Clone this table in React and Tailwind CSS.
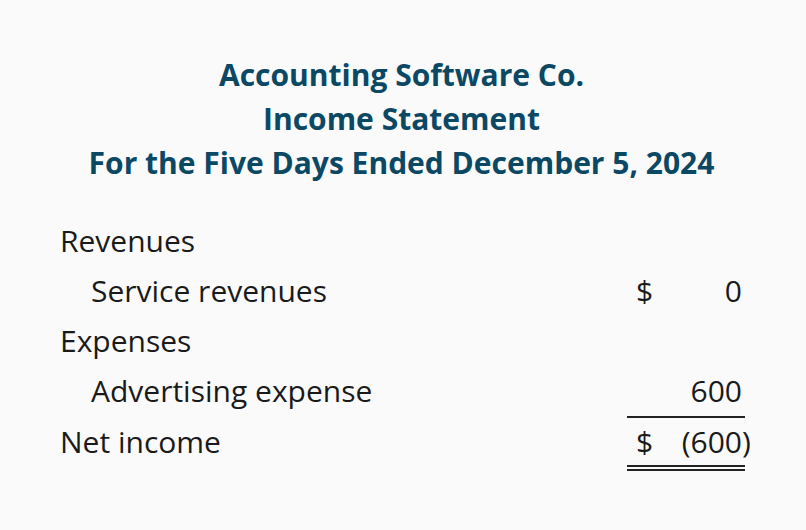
export default function App() {
  const font = { fontFamily: '"Open Sans", sans-serif' };
  return (
    <div className="w-[806px] h-[530px] bg-[#fafafa] text-[#1a1a1a]" style={font}>
      <div className="pt-[53px] pr-[3px] flex flex-col items-center text-[#0b4864] font-bold text-[30px] leading-[44px]">
        <div>Accounting Software Co.</div>
        <div>Income Statement</div>
        <div>For the Five Days Ended December 5, 2024</div>
      </div>
      <div className="mt-[31px] pl-[60px] pr-[61px] text-[30px] leading-[50px]">
        <div>Revenues</div>
        <div className="flex">
          <div className="flex-1 pl-[31px]">Service revenues</div>
          <div className="w-[118px] flex justify-between pl-[9px] pr-[3px]">
            <span>$</span>
            <span>0</span>
          </div>
        </div>
        <div>Expenses</div>
        <div className="flex h-[52px] items-start">
          <div className="flex-1 pl-[31px]">Advertising expense</div>
          <div className="w-[118px] h-[52px] flex justify-end pr-[3px] border-b-2 border-[#222]">
            <span>600</span>
          </div>
        </div>
        <div className="flex h-[53px] items-start">
          <div className="flex-1 leading-[48px]">Net income</div>
          <div className="w-[118px] h-[53px] leading-[48px] flex justify-between pl-[9px] pr-[3px] border-b-[6px] border-double border-[#222]">
            <span>$</span>
            <span className="relative">(600<span className="absolute left-full">)</span></span>
          </div>
        </div>
      </div>
    </div>
  );
}
